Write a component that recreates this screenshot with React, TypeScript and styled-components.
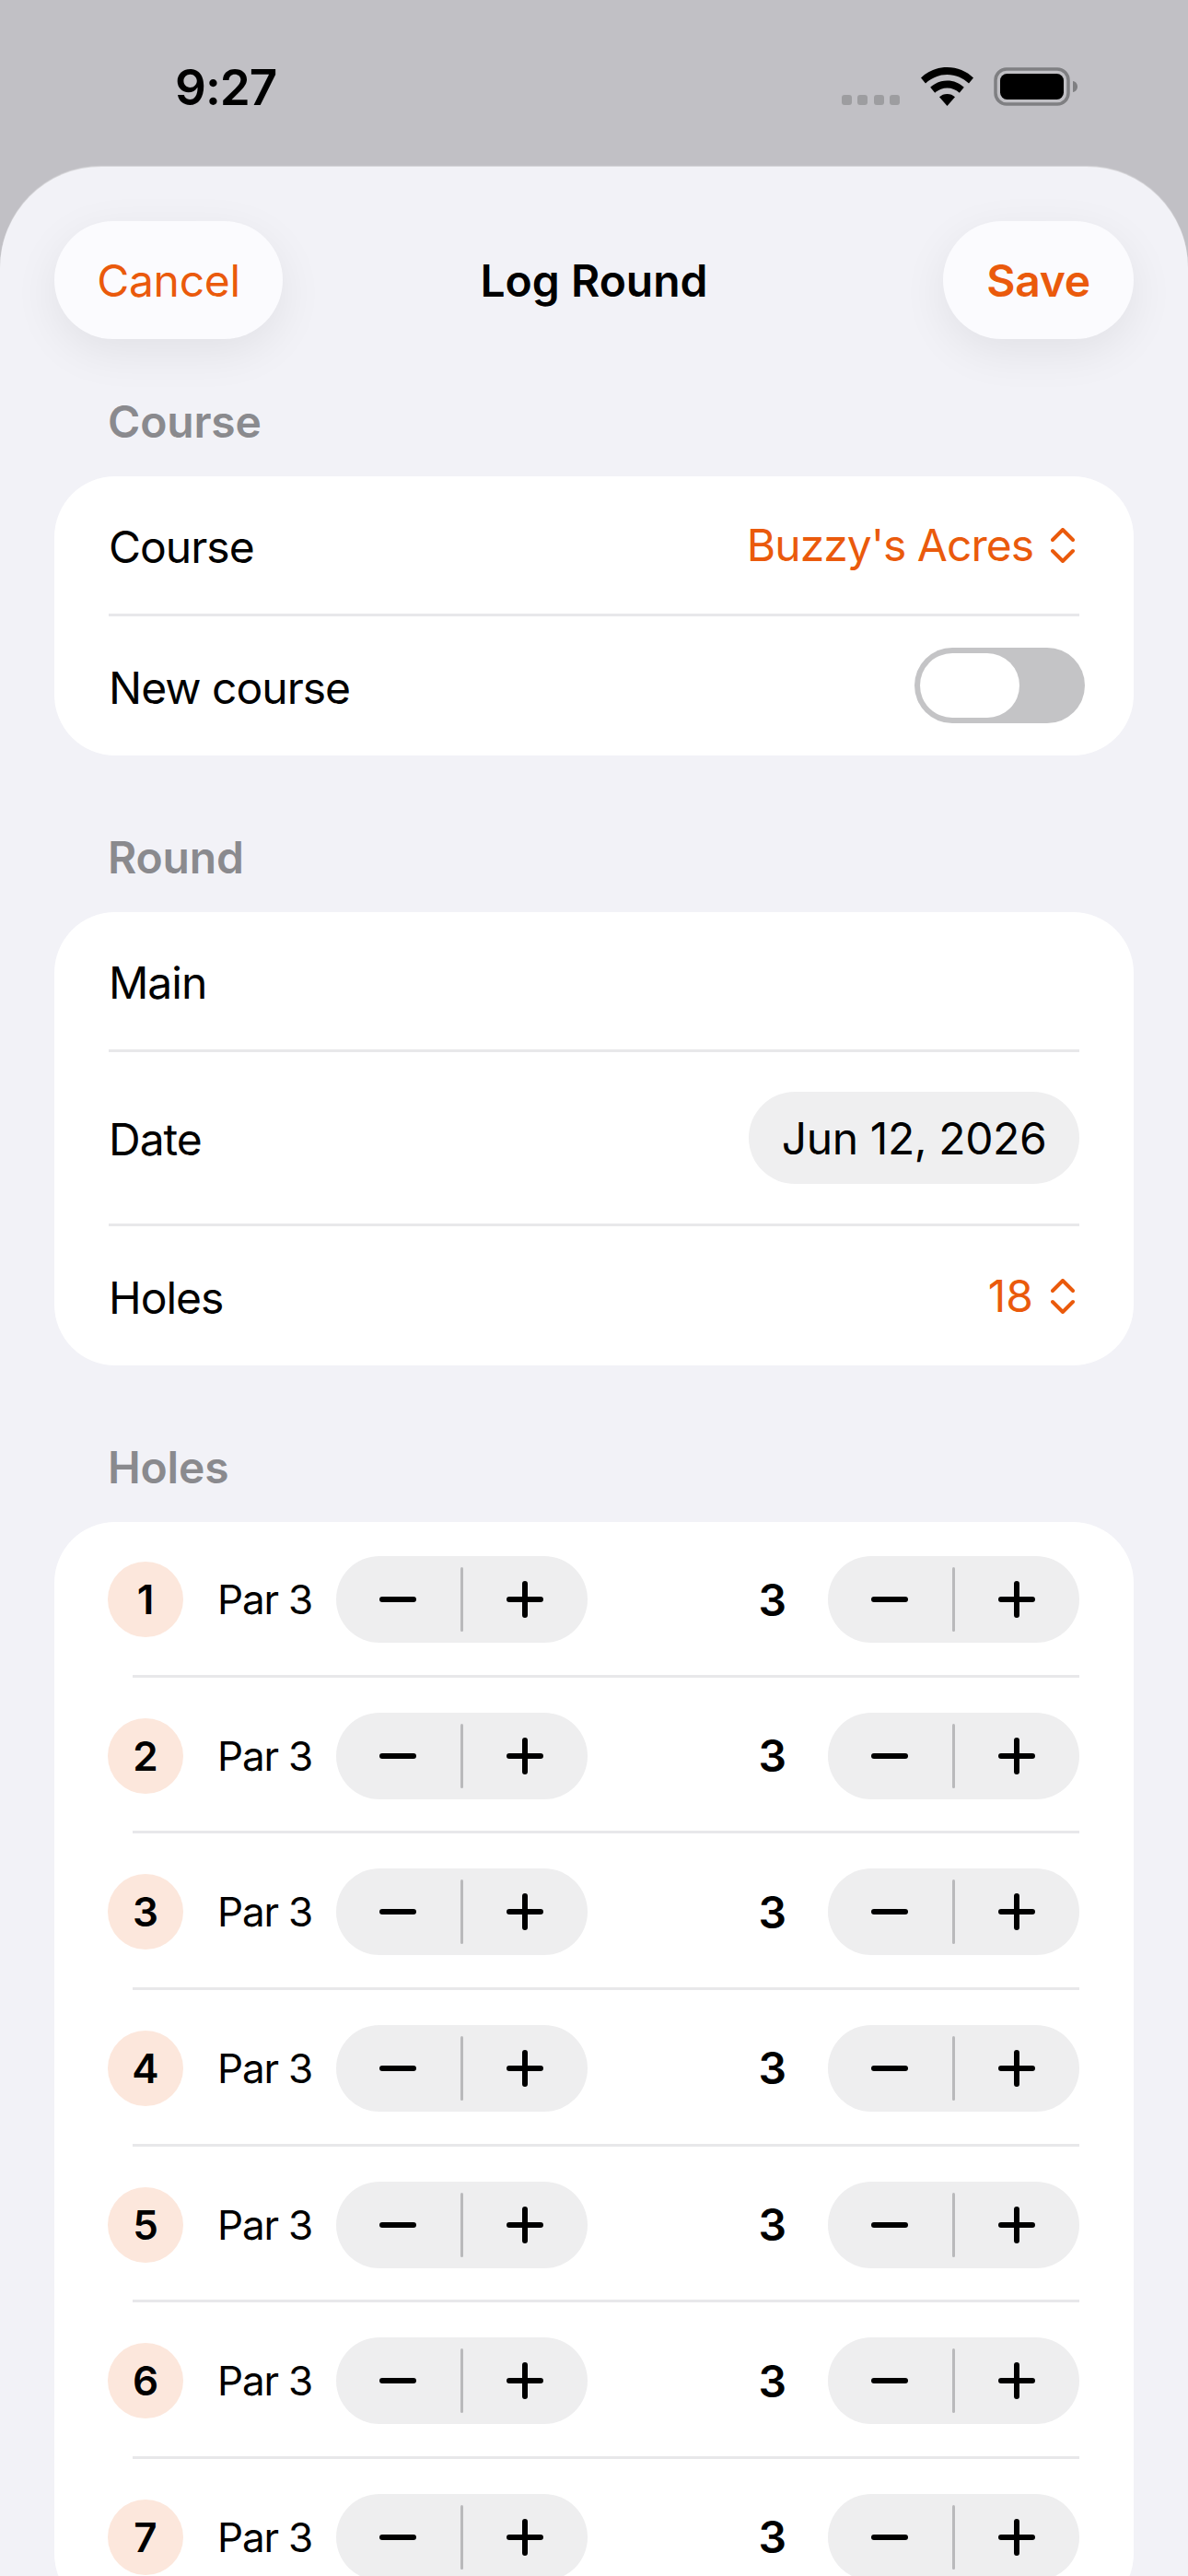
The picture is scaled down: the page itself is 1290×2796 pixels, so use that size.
import React from 'react'
import styled, { createGlobalStyle } from 'styled-components'

const ORANGE = '#ea5a0c'

const GlobalStyle = createGlobalStyle`
  html, body {
    margin: 0;
    padding: 0;
    background: #c1c0c5;
  }
  * {
    box-sizing: border-box;
  }
  body {
    font-family: Inter, "Liberation Sans", sans-serif;
    -webkit-font-smoothing: antialiased;
  }
`

const Screen = styled.div`
  width: 1290px;
  height: 2796px;
  overflow: hidden;
  display: flex;
  flex-direction: column;
  background: #c1c0c5;
`

const StatusBar = styled.div`
  height: 181px;
  flex-shrink: 0;
  padding: 70px 119px 0 190px;
  display: flex;
  justify-content: space-between;
  align-items: flex-start;
`

const Time = styled.span`
  font-size: 53px;
  line-height: 50px;
  font-weight: 600;
  letter-spacing: -1px;
  color: #000;
`

const StatusIcons = styled.div`
  display: flex;
  align-items: flex-start;
  padding-top: 3px;
  gap: 22px;
`

const Dots = styled.div`
  display: flex;
  gap: 6.5px;
  margin-top: 30px;
  margin-right: 1px;
`

const Dot = styled.span`
  width: 11px;
  height: 11px;
  border-radius: 3px;
  background: #9d9da0;
`

const Sheet = styled.div`
  flex: 1;
  background: #f2f2f7;
  border-radius: 110px 110px 0 0;
  padding: 59px 59px 0;
  box-shadow: 0 -1px 1px rgba(255, 255, 255, 0.4);
`

const Header = styled.div`
  display: grid;
  grid-template-columns: 1fr auto 1fr;
  align-items: center;
  height: 128px;
`

const HeaderButton = styled.div<{ $bold?: boolean; $end?: boolean }>`
  justify-self: ${p => (p.$end ? 'end' : 'start')};
  height: 128px;
  width: ${p => (p.$end ? '207px' : '248px')};
  border-radius: 64px;
  display: flex;
  align-items: center;
  justify-content: center;
  background: #fbfbfe;
  color: ${ORANGE};
  font-size: 48px;
  letter-spacing: -0.3px;
  font-weight: ${p => (p.$bold ? 600 : 400)};
  box-shadow: 0 14px 50px rgba(0, 0, 0, 0.07);
`

const Title = styled.div`
  font-size: 48px;
  font-weight: 600;
  color: #000;
`

const SectionLabel = styled.div`
  font-size: 48px;
  line-height: 60px;
  font-weight: 600;
  letter-spacing: -0.2px;
  color: #8a8a8e;
  padding: 1px 0 0 58px;
  margin-bottom: 29px;
`

const FirstLabel = styled(SectionLabel)`
  margin-top: 59px;
`

const Card = styled.div`
  background: #fff;
  border-radius: 66px;
  padding: 0 59px;
  margin-bottom: 80px;
`

const Row = styled.div<{ $height: number; $last?: boolean }>`
  height: ${p => p.$height}px;
  display: flex;
  align-items: center;
  justify-content: space-between;
  border-bottom: ${p => (p.$last ? 'none' : '3px solid #e8e8ea')};
  font-size: 48px;
  letter-spacing: -1px;
  color: #000;
`

const RowLabel = styled.span`
  padding-top: 3px;
`

const Value = styled.div`
  display: flex;
  align-items: center;
  gap: 19px;
  color: ${ORANGE};
  margin-right: 5px;
`

const NumberValue = styled(Value)`
  letter-spacing: 0;
`

const Toggle = styled.div`
  width: 185px;
  height: 82px;
  margin-right: -6px;
  margin-bottom: 1px;
  padding: 6px;
  border-radius: 41px;
  background: #c4c4c6;
`

const Knob = styled.div`
  width: 108px;
  height: 70px;
  border-radius: 35px;
  background: #fff;
`

const DatePill = styled.div`
  width: 359px;
  height: 100px;
  border-radius: 50px;
  background: #efeff0;
  display: flex;
  align-items: center;
  justify-content: center;
  letter-spacing: -0.4px;
`

const HolesCard = styled(Card)`
  padding: 0 59px 0 58px;
`

const HoleRow = styled.div<{ $first?: boolean }>`
  height: ${p => (p.$first ? '168.8px' : '169.6px')};
  padding-top: ${p => (p.$first ? '37px' : '38px')};
  display: grid;
  grid-template-columns: 82px 166px 273px 1fr 273px;
  align-content: start;
  align-items: center;
  position: relative;

  &::after {
    content: '';
    position: absolute;
    left: 27px;
    right: 0;
    bottom: 0;
    height: 3px;
    background: #e8e8ea;
  }
`

const HoleBadge = styled.div`
  width: 82px;
  height: 82px;
  border-radius: 50%;
  background: #fce7dc;
  display: flex;
  align-items: center;
  justify-content: center;
  font-size: 44px;
  font-weight: 600;
  color: #000;
`

const Par = styled.div`
  font-size: 44px;
  letter-spacing: -1.2px;
  padding-left: 37px;
  color: #000;
  white-space: nowrap;
`

const Score = styled.div`
  font-size: 48px;
  font-weight: 600;
  text-align: right;
  padding-right: 45px;
  color: #000;
`

const Stepper = styled.div`
  width: 273px;
  height: 94px;
  border-radius: 47px;
  background: #eeeeef;
  display: flex;
  align-items: center;
  justify-content: space-between;
  padding: 0 48px 0 47px;
`

const StepperDivider = styled.span`
  width: 3px;
  height: 70px;
  border-radius: 2px;
  background: #b9b9bb;
`

const UpDown = () => (
  <svg width="26" height="38" viewBox="0 0 26 38" fill="none" stroke={ORANGE} strokeWidth="4" strokeLinecap="round" strokeLinejoin="round">
    <path d="M2 13 L13 2 L24 13" />
    <path d="M2 25 L13 36 L24 25" />
  </svg>
)

const Wifi = () => (
  <svg width="57" height="42" viewBox="0 0 57 42">
    <path d="M28.500 0C39.500 0 49.500 4.200 57 11.500L52 17.500C45.800 11.600 37.500 8 28.500 8S11.200 11.600 5 17.500L0 11.500C7.500 4.200 17.500 0 28.500 0Z" fill="#000" />
    <path d="M28.500 14.500C35.500 14.500 42 17.200 46.800 21.800L41.800 27.800C38.300 24.500 33.600 22.500 28.500 22.500S18.700 24.500 15.200 27.800L10.200 21.800C15 17.200 21.500 14.500 28.500 14.500Z" fill="#000" />
    <path d="M28.500 29C31.800 29 34.800 30.200 37 32.300L28.500 42L20 32.300C22.200 30.200 25.200 29 28.500 29Z" fill="#000" />
  </svg>
)

const Battery = () => (
  <svg width="92" height="42" viewBox="0 0 92 42">
    <rect x="2" y="2" width="79" height="38" rx="12" fill="none" stroke="#7f7f82" strokeWidth="3.5" />
    <rect x="7" y="7" width="69" height="28" rx="7.5" fill="#000" />
    <path d="M86 15C89 15.500 91 18 91 21S89 26.500 86 27Z" fill="#7f7f82" />
  </svg>
)

const Minus = () => (
  <svg width="40" height="40" viewBox="0 0 40 40" stroke="#000" strokeWidth="6" strokeLinecap="round">
    <path d="M3 20H37" />
  </svg>
)

const Plus = () => (
  <svg width="40" height="40" viewBox="0 0 40 40" stroke="#000" strokeWidth="6" strokeLinecap="round">
    <path d="M3 20H37M20 3V37" />
  </svg>
)

const StepControl = () => (
  <Stepper>
    <Minus />
    <StepperDivider />
    <Plus />
  </Stepper>
)

const holes = [1, 2, 3, 4, 5, 6, 7]

export default function App() {
  return (
    <Screen>
      <GlobalStyle />
      <StatusBar>
        <Time>9:27</Time>
        <StatusIcons>
          <Dots>
            <Dot />
            <Dot />
            <Dot />
            <Dot />
          </Dots>
          <Wifi />
          <Battery />
        </StatusIcons>
      </StatusBar>
      <Sheet>
        <Header>
          <HeaderButton>Cancel</HeaderButton>
          <Title>Log Round</Title>
          <HeaderButton $bold $end>Save</HeaderButton>
        </Header>

        <FirstLabel>Course</FirstLabel>
        <Card>
          <Row $height={152}>
            <RowLabel>Course</RowLabel>
            <Value>
              Buzzy's Acres
              <UpDown />
            </Value>
          </Row>
          <Row $height={151} $last>
            <RowLabel>New course</RowLabel>
            <Toggle>
              <Knob />
            </Toggle>
          </Row>
        </Card>

        <SectionLabel>Round</SectionLabel>
        <Card>
          <Row $height={152}>
            <RowLabel>Main</RowLabel>
          </Row>
          <Row $height={189}>
            <RowLabel>Date</RowLabel>
            <DatePill>Jun 12, 2026</DatePill>
          </Row>
          <Row $height={151} $last>
            <RowLabel>Holes</RowLabel>
            <NumberValue>
              18
              <UpDown />
            </NumberValue>
          </Row>
        </Card>

        <SectionLabel>Holes</SectionLabel>
        <HolesCard>
          {holes.map(n => (
            <HoleRow key={n} $first={n === 1}>
              <HoleBadge>{n}</HoleBadge>
              <Par>Par 3</Par>
              <StepControl />
              <Score>3</Score>
              <StepControl />
            </HoleRow>
          ))}
        </HolesCard>
      </Sheet>
    </Screen>
  )
}
